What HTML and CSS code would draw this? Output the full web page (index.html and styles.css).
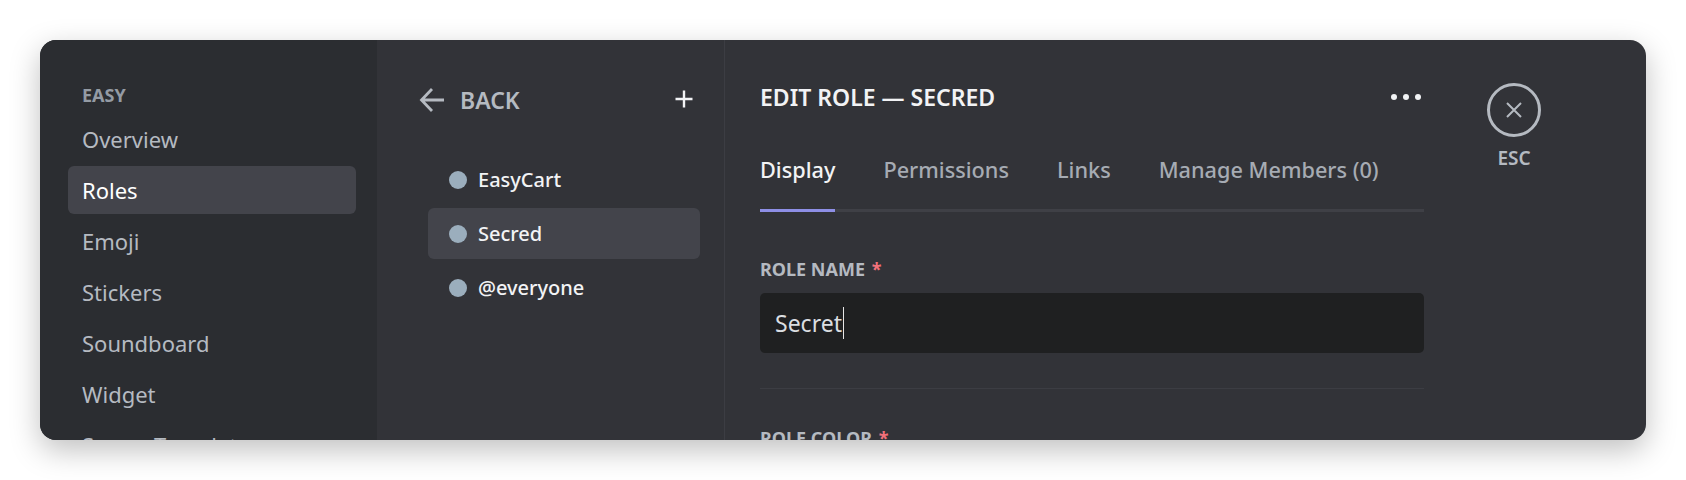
FILE: index.html
```html
<!DOCTYPE html>
<html lang="en">
<head>
<meta charset="utf-8">
<title>Edit Role</title>
<link rel="stylesheet" href="styles.css">
</head>
<body>
<div class="window">
  <nav class="sidebar">
    <div class="side-head">EASY</div>
    <div class="side-item">Overview</div>
    <div class="side-item active">Roles</div>
    <div class="side-item">Emoji</div>
    <div class="side-item">Stickers</div>
    <div class="side-item">Soundboard</div>
    <div class="side-item">Widget</div>
    <div class="side-item">Server Template</div>
  </nav>
  <section class="roles">
    <div class="roles-head">
      <svg class="back-icon" width="26" height="26" viewBox="0 0 26 26" fill="none"><path d="M25 13H3M13 2 2.5 13 13 24" stroke="#b5bac1" stroke-width="2.8"/></svg>
      <span class="back-label">BACK</span>
      <svg class="plus-icon" width="18" height="18" viewBox="0 0 18 18" fill="none"><path d="M9 0.5v17M0.5 9h17" stroke="#f2f3f5" stroke-width="2.4"/></svg>
    </div>
    <div class="role-list">
      <div class="role"><span class="dot"></span>EasyCart</div>
      <div class="role active"><span class="dot"></span>Secred</div>
      <div class="role"><span class="dot"></span>@everyone</div>
    </div>
  </section>
  <main class="content">
    <div class="content-col">
      <div class="title-row">
        <h1 class="title">EDIT ROLE — SECRED</h1>
        <div class="more"><i></i><i></i><i></i></div>
      </div>
      <div class="tabs">
        <div class="tab active">Display</div>
        <div class="tab">Permissions</div>
        <div class="tab">Links</div>
        <div class="tab">Manage Members (0)</div>
      </div>
      <div class="label label-name">ROLE NAME <span class="req">*</span></div>
      <div class="input"><span>Secret</span><span class="caret"></span></div>
      <div class="divider"></div>
      <div class="label">ROLE COLOR <span class="req">*</span></div>
    </div>
    <div class="close">
      <div class="close-btn">
        <svg width="18" height="18" viewBox="0 0 18 18" fill="none"><path d="M2 2l14 14M16 2 2 16" stroke="#b5bac1" stroke-width="2"/></svg>
      </div>
      <div class="esc">ESC</div>
    </div>
  </main>
</div>
</body>
</html>
```
FILE: styles.css
```css
* { box-sizing: border-box; }
html, body { margin: 0; height: 100%; background: #fff; overflow: hidden; }
body { padding: 40px; font-family: "Noto Sans", "Open Sans", sans-serif; }

.window {
  display: flex;
  width: 1606px;
  height: 400px;
  border-radius: 16px;
  overflow: hidden;
  background: #323338;
  box-shadow: 0 10px 30px rgba(0, 0, 0, 0.25);
}

.sidebar {
  width: 337px;
  flex: none;
  background: #2b2d31;
  padding: 44px 21px 0 28px;
}
.side-head {
  padding-left: 14px;
  font-size: 18px;
  line-height: 22px;
  font-weight: 700;
  color: #949ba4;
  margin-bottom: 9px;
}
.side-item {
  height: 48px;
  margin-bottom: 3px;
  padding-left: 14px;
  border-radius: 6px;
  font-size: 22px;
  line-height: 48px;
  color: #b5bac1;
}
.side-item.active { background: #43444b; color: #fff; }

.roles {
  width: 348px;
  flex: none;
  border-right: 1px solid #3c3d43;
  padding: 44px 24px 0 42px;
}
.roles-head {
  display: flex;
  align-items: center;
  height: 32px;
}
.back-icon { margin-right: 15px; }
.back-label { font-size: 23px; font-weight: 600; color: #b5bac1; }
.plus-icon { margin: 0 7px 2px auto; }
.role-list { margin: 38px 0 0 9px; }
.role {
  display: flex;
  align-items: center;
  height: 51px;
  margin-bottom: 3px;
  padding-left: 21px;
  border-radius: 6px;
  font-size: 20px;
  font-weight: 500;
  color: #f2f3f5;
}
.role.active { background: #43444b; }
.dot {
  width: 18px;
  height: 18px;
  margin-right: 11px;
  border-radius: 50%;
  background: #9baebd;
}

.content {
  display: flex;
  flex: 1;
  padding: 43px 0 0 35px;
}
.content-col { width: 664px; flex: none; }
.title-row {
  display: flex;
  align-items: center;
  justify-content: space-between;
  height: 28px;
}
.title {
  margin: 0;
  font-size: 23px;
  font-weight: 600;
  color: #f2f3f5;
}
.more { display: flex; gap: 6px; margin-right: 3px; }
.more i { width: 6px; height: 6px; border-radius: 50%; background: #f2f3f5; }
.tabs {
  display: flex;
  gap: 48px;
  margin-top: 43px;
  height: 58px;
  border-bottom: 3px solid #3f4046;
}
.tab {
  height: 58px;
  font-size: 21.7px;
  font-weight: 500;
  line-height: 32px;
  color: #a6abb3;
}
.tab.active { color: #f2f3f5; border-bottom: 3px solid #8e8fe6; }
.label {
  font-size: 18px;
  line-height: 22px;
  font-weight: 700;
  color: #b5bac1;
}
.label-name { margin-top: 46px; }
.req { color: #f2717a; margin-left: 2px; }
.input {
  display: flex;
  align-items: center;
  height: 60px;
  margin-top: 13px;
  padding-left: 15px;
  border-radius: 5px;
  background: #1f2021;
  font-size: 23px;
  color: #dbdee1;
}
.caret { width: 1px; height: 32px; margin-left: 1px; background: #e6e6e6; }
.divider { height: 1px; margin: 35px 0 38px; background: #3c3d43; }

.close {
  display: flex;
  flex-direction: column;
  align-items: center;
  width: 54px;
  margin: 0 0 0 63px;
}
.close-btn {
  display: flex;
  align-items: center;
  justify-content: center;
  width: 54px;
  height: 54px;
  border: 3px solid #b5bac1;
  border-radius: 50%;
}
.esc {
  margin-top: 9px;
  font-size: 19px;
  line-height: 24px;
  font-weight: 600;
  color: #b5bac1;
}
```
